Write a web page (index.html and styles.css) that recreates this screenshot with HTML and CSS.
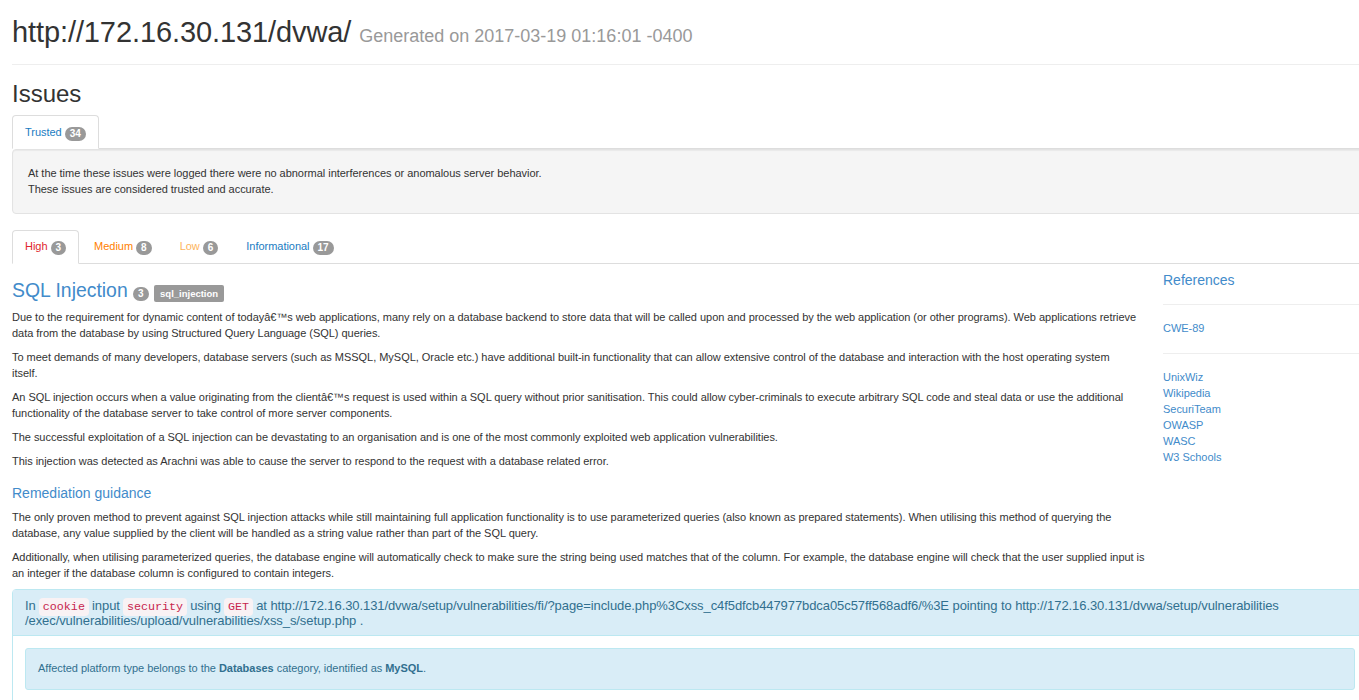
FILE: index.html
```
<!DOCTYPE html>
<html lang="en">
<head>
<meta charset="utf-8">
<title>Arachni report</title>
<link rel="stylesheet" href="styles.css">
</head>
<body>
<div class="page">
  <header class="page-header">
    <h1 class="site">http://172.16.30.131/dvwa/ <small>Generated on 2017-03-19 01:16:01 -0400</small></h1>
  </header>
  <h2 class="issues-title">Issues</h2>
  <ul class="tabs tabs-first">
    <li class="tab active"><a class="c-blue" href="#">Trusted <span class="badge">34</span></a></li>
  </ul>
  <div class="well">
    <p>At the time these issues were logged there were no abnormal interferences or anomalous server behavior.</p>
    <p>These issues are considered trusted and accurate.</p>
  </div>
  <ul class="tabs">
    <li class="tab active"><a class="c-red" href="#">High <span class="badge">3</span></a></li>
    <li class="tab"><a class="c-orange" href="#">Medium <span class="badge">8</span></a></li>
    <li class="tab"><a class="c-amber" href="#">Low <span class="badge">6</span></a></li>
    <li class="tab"><a class="c-blue" href="#">Informational <span class="badge">17</span></a></li>
  </ul>
  <div class="issue">
    <main class="issue-main">
      <h3 class="issue-title"><a href="#">SQL Injection</a> <span class="badge">3</span> <span class="label">sql_injection</span></h3>
      <p>Due to the requirement for dynamic content of todayâ€™s web applications, many rely on a database backend to store data that will be called upon and processed by the web application (or other programs). Web applications retrieve data from the database by using Structured Query Language (SQL) queries.</p>
      <p>To meet demands of many developers, database servers (such as MSSQL, MySQL, Oracle etc.) have additional built-in functionality that can allow extensive control of the database and interaction with the host operating system<br>itself.</p>
      <p>An SQL injection occurs when a value originating from the clientâ€™s request is used within a SQL query without prior sanitisation. This could allow cyber-criminals to execute arbitrary SQL code and steal data or use the additional functionality of the database server to take control of more server components.</p>
      <p>The successful exploitation of a SQL injection can be devastating to an organisation and is one of the most commonly exploited web application vulnerabilities.</p>
      <p>This injection was detected as Arachni was able to cause the server to respond to the request with a database related error.</p>
      <h4 class="sub-title">Remediation guidance</h4>
      <p>The only proven method to prevent against SQL injection attacks while still maintaining full application functionality is to use parameterized queries (also known as prepared statements). When utilising this method of querying the database, any value supplied by the client will be handled as a string value rather than part of the SQL query.</p>
      <p>Additionally, when utilising parameterized queries, the database engine will automatically check to make sure the string being used matches that of the column. For example, the database engine will check that the user supplied input is<br>an integer if the database column is configured to contain integers.</p>
    </main>
    <aside class="refs">
      <h4 class="refs-title"><a href="#">References</a></h4>
      <hr>
      <ul class="ref-list"><li><a href="#">CWE-89</a></li></ul>
      <hr>
      <ul class="ref-list">
        <li><a href="#">UnixWiz</a></li>
        <li><a href="#">Wikipedia</a></li>
        <li><a href="#">SecuriTeam</a></li>
        <li><a href="#">OWASP</a></li>
        <li><a href="#">WASC</a></li>
        <li><a href="#">W3 Schools</a></li>
      </ul>
    </aside>
  </div>
  <section class="panel">
    <div class="panel-heading">In <code>cookie</code> input <code>security</code> using <code>GET</code> at http://172.16.30.131/dvwa/setup/vulnerabilities/fi/?page=include.php%3Cxss_c4f5dfcb447977bdca05c57ff568adf6/%3E pointing to http://172.16.30.131/dvwa/setup/vulnerabilities<br>/exec/vulnerabilities/upload/vulnerabilities/xss_s/setup.php .</div>
    <div class="panel-body">
      <div class="alert">Affected platform type belongs to the <strong>Databases</strong> category, identified as <strong>MySQL</strong>.</div>
    </div>
  </section>
</div>
</body>
</html>
```
FILE: styles.css
```
* { box-sizing: border-box; }
html, body { margin: 0; height: 700px; overflow: hidden; }
body { font-family: "Liberation Sans", Arial, sans-serif; font-size: 11px; line-height: 16px; letter-spacing: -0.03px; color: #333; background: #fff; }
a { color: #428bca; text-decoration: none; }
p { margin: 0 0 8px; }
ul { list-style: none; margin: 0; padding: 0; }
.page { width: 1376px; padding-left: 12px; }
.page-header { height: 65px; padding-top: 14px; border-bottom: 1px solid #eee; }
.site { margin: 0; font-size: 29px; line-height: 36px; font-weight: 400; letter-spacing: -0.1px; color: #333; }
.site small { font-size: 18px; font-weight: 400; letter-spacing: 0; color: #999; }
.issues-title { margin: 15px 0 7px; font-size: 24px; line-height: 28px; font-weight: 400; letter-spacing: 0; color: #333; }
.tabs { display: flex; gap: 2px; border-bottom: 1px solid #ddd; height: 34px; }
.tab { margin-bottom: -1px; height: 34px; }
.tab a { display: block; height: 34px; padding: 7px 12px 8px; border: 1px solid transparent; border-radius: 4px 4px 0 0; }
.tab.active a { background: #fff; border-color: #ddd #ddd #fff; }
.c-blue, .tab a.c-blue { color: #1a7cc2; }
.tab a.c-red { color: #e0262c; }
.tab a.c-orange { color: #ff8000; }
.tab a.c-amber { color: #fdb45c; }
.badge { display: inline-block; min-width: 10px; padding: 2px 5px; font-size: 10px; line-height: 10px; font-weight: 700; letter-spacing: 0; color: #fff; background: #999; border-radius: 10px; text-align: center; vertical-align: -1px; }
.tabs-first .tab a { padding-top: 8px; }
.well { margin: 0 0 16px; padding: 15px 15px 7px; height: 65px; background: #f5f5f5; border: 1px solid #e3e3e3; border-radius: 4px; box-shadow: inset 0 1px 1px rgba(0,0,0,.05); }
.well p { margin: 0; }
.issue { display: flex; }
.issue-main { width: 1151px; padding-right: 4px; }
.issue-title { margin: 15px 0 7px; font-size: 19.4px; line-height: 22px; font-weight: 400; letter-spacing: 0; }
.issue-title .badge { position: relative; top: -1px; }
.label { display: inline-block; padding: 3px 6px; font-size: 9.5px; line-height: 11px; font-weight: 700; letter-spacing: 0; color: #fff; background: #999; border-radius: 2px; vertical-align: 0; }
.sub-title { margin: 16px 0 8px; font-size: 14px; line-height: 16px; font-weight: 400; letter-spacing: 0; color: #428bca; }
.refs { flex: 1; }
.refs-title { margin: 8px 0 15px; font-size: 14px; line-height: 16px; font-weight: 400; letter-spacing: 0; }
.refs hr { margin: 16px 0 15px; border: 0; border-top: 1px solid #eee; }
.refs hr + .ref-list + hr { margin-top: 17px; }
.panel { border: 1px solid #bce8f1; border-radius: 4px; }
.panel-heading { padding: 9px 12px 9px; height: 46px; font-size: 13px; line-height: 14px; letter-spacing: -0.08px; color: #31708f; background: #d9edf7; border-bottom: 1px solid #bce8f1; }
code { font-family: "Liberation Mono", monospace; font-size: 11.7px; letter-spacing: 0; padding: 2px 3.6px; color: #c7254e; background: #f9f2f4; border-radius: 4px; }
.panel-body { padding: 12px 12px 40px; width: 1354px; }
.alert { padding: 11px 12px; height: 42px; color: #31708f; background: #d9edf7; border: 1px solid #bce8f1; border-radius: 3px; }
```
